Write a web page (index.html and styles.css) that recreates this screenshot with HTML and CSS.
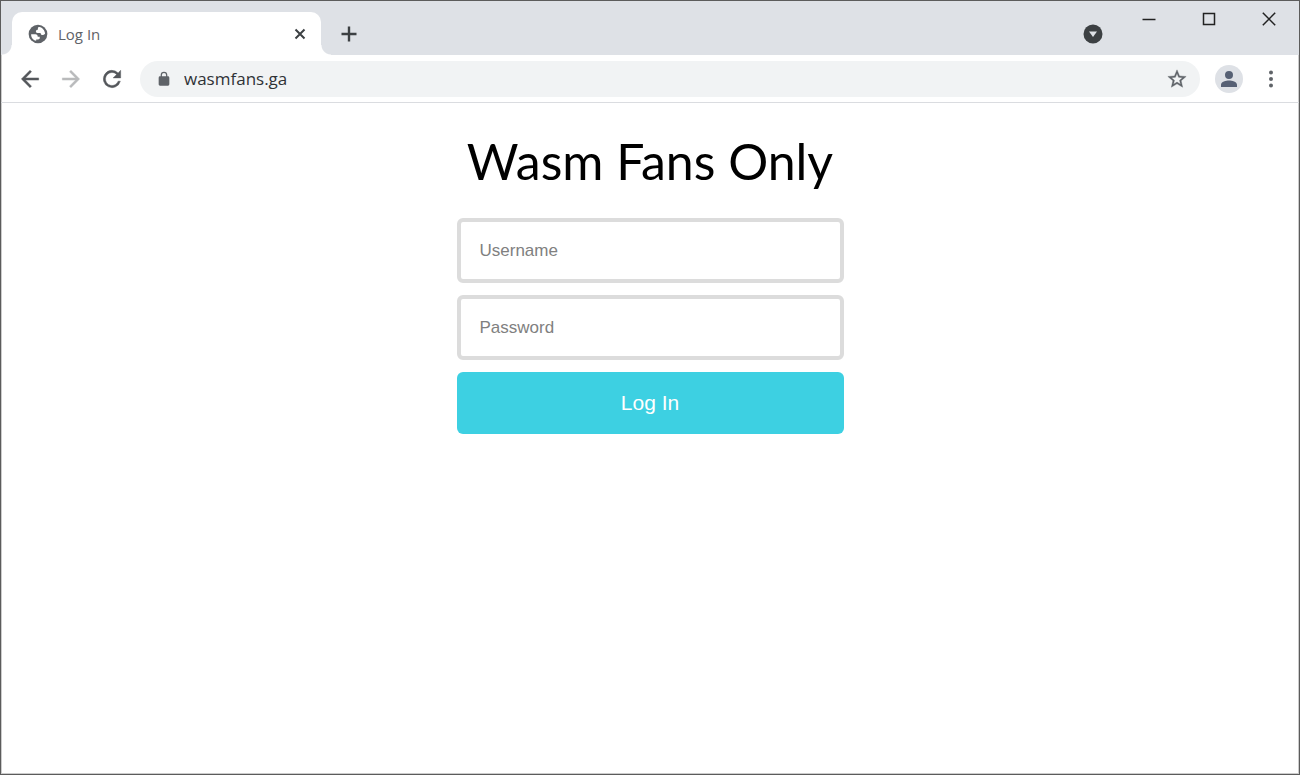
FILE: index.html
```html
<!DOCTYPE html>
<html lang="en">
<head>
<meta charset="utf-8">
<title>Log In</title>
<link rel="stylesheet" href="styles.css">
</head>
<body>
<div class="window">
  <header class="tab-strip">
    <div class="tab">
      <svg class="icon-tab" viewBox="0 0 24 24" aria-hidden="true"><circle cx="12" cy="12" r="10.200"/><path d="M4.500 12.300h4.700c1.800 0 2.500 1 2.500 2.700h2.200v1.700c0 .8-.8 1.300-1.800 1.300H10v1.400C6.500 18.700 4.300 15.600 4.500 12.300zM13.500 4.300c3.500.7 6 3.800 6.200 7.400-.8.900-1.800 1.300-2.700 1.300-1.300 0-2.200-.8-2.200-2.200h-3.300c-1.300 0-1.800-.8-1.800-1.800s.8-1.700 2.200-1.700V5.500c0-.7.700-1.200 1.600-1.200z"/></svg>
      <span class="tab-title">Log In</span>
      <button class="icon-button" type="button" aria-label="Close tab"><svg class="icon-close-tab" viewBox="0 0 12 12"><path d="M1.500 1.500l9 9M10.500 1.500l-9 9"/></svg></button>
    </div>
    <button class="icon-button new-tab" type="button" aria-label="New tab"><svg class="icon-plus" viewBox="0 0 16 16"><path d="M8 .5v15M.5 8h15"/></svg></button>
    <button class="icon-button tab-search" type="button" aria-label="Search tabs"><svg class="icon-search" viewBox="0 0 20 20"><circle cx="10" cy="10" r="9.500"/><path d="M6 7.500h8l-4 5.500z"/></svg></button>
    <div class="window-controls">
      <button class="window-button" type="button" aria-label="Minimize"><svg viewBox="0 0 14 14"><path d="M.5 7.500h13"/></svg></button>
      <button class="window-button" type="button" aria-label="Maximize"><svg viewBox="0 0 14 14"><path d="M1.500 1.500h11v11h-11z"/></svg></button>
      <button class="window-button" type="button" aria-label="Close"><svg viewBox="0 0 14 14"><path d="M.8.8l12.400 12.400M13.200.8L.8 13.200"/></svg></button>
    </div>
  </header>
  <nav class="toolbar" aria-label="Navigation">
    <button class="icon-button" type="button" aria-label="Back"><svg class="icon-nav" viewBox="0 0 24 24"><path d="M20 11H7.830l5.590-5.590L12 4l-8 8 8 8 1.410-1.410L7.830 13H20z"/></svg></button>
    <button class="icon-button" type="button" aria-label="Forward" disabled><svg class="icon-nav icon-nav-off" viewBox="0 0 24 24"><path d="M12 4l-1.410 1.410L16.170 11H4v2h12.170l-5.580 5.590L12 20l8-8z"/></svg></button>
    <button class="icon-button" type="button" aria-label="Reload"><svg class="icon-nav" viewBox="0 0 24 24"><path d="M17.650 6.350A8 8 0 1 0 19.730 14h-2.080A6 6 0 1 1 12 6c1.660 0 3.140.69 4.220 1.780L13 11h7V4z"/></svg></button>
    <div class="address-bar">
      <svg class="icon-lock" viewBox="0 0 24 24" aria-hidden="true"><path d="M18 8h-1V6A5 5 0 0 0 7 6v2H6a2 2 0 0 0-2 2v10c0 1.100.9 2 2 2h12a2 2 0 0 0 2-2V10a2 2 0 0 0-2-2zM8.900 8V6a3.100 3.100 0 0 1 6.200 0v2z"/></svg>
      <input class="address-input" type="text" value="wasmfans.ga" aria-label="Address" spellcheck="false">
      <button class="icon-button" type="button" aria-label="Bookmark"><svg class="icon-star" viewBox="0 0 24 24"><path d="M22 9.240l-7.190-.62L12 2 9.190 8.630 2 9.240l5.460 4.730L5.820 21 12 17.270 18.180 21l-1.630-7.030zM12 15.400l-3.760 2.270 1-4.280-3.320-2.880 4.380-.38L12 6.100l1.710 4.040 4.380.38-3.320 2.880 1 4.280z"/></svg></button>
    </div>
    <button class="icon-button avatar" type="button" aria-label="Profile"><svg class="icon-person" viewBox="0 0 16 16"><path d="M8 8a4 4 0 1 0 0-8 4 4 0 0 0 0 8zM8 9.500c-3 0-8 1.200-8 4.200V16h16v-2.300c0-3-5-4.200-8-4.200z"/></svg></button>
    <button class="icon-button" type="button" aria-label="Menu"><svg class="icon-menu" viewBox="0 0 4 18"><circle cx="2" cy="2.500" r="2"/><circle cx="2" cy="9" r="2"/><circle cx="2" cy="15.500" r="2"/></svg></button>
  </nav>
  <main class="page">
    <form class="login">
      <h1 class="login-title">Wasm Fans Only</h1>
      <input class="login-field" type="text" placeholder="Username" aria-label="Username">
      <input class="login-field" type="password" placeholder="Password" aria-label="Password">
      <button class="login-submit" type="button">Log In</button>
    </form>
  </main>
</div>
</body>
</html>
```
FILE: styles.css
```css
* { box-sizing: border-box; }

body { margin: 0; background: #fff; }

.window {
  display: flex;
  flex-direction: column;
  min-height: 100vh;
  border: 1px solid #5c5c5c;
  box-shadow: inset 0 0 0 1px #ccc;
}

svg { display: block; }

.icon-button {
  display: flex;
  align-items: center;
  justify-content: center;
  flex: none;
  padding: 0;
  border: 0;
  background: none;
}

.tab-strip {
  display: flex;
  align-items: flex-end;
  height: 54px;
  padding-left: 11px;
  background: #dee1e6;
}

.tab {
  position: relative;
  display: flex;
  align-items: center;
  gap: 9px;
  width: 309px;
  height: 43px;
  padding: 0 15px 0 15px;
  border-radius: 10px 10px 0 0;
  background: #fff;
}

.tab::before,
.tab::after {
  content: "";
  position: absolute;
  bottom: 0;
  width: 10px;
  height: 10px;
}

.tab::before {
  right: 100%;
  background: radial-gradient(circle at 0 0, #dee1e6 9px, #fff 10px);
}

.tab::after {
  left: 100%;
  background: radial-gradient(circle at 100% 0, #dee1e6 9px, #fff 10px);
}

.tab-title {
  flex: 1;
  color: #5f6368;
  font: 15px/20px "Open Sans", "Noto Sans", sans-serif;
}

.icon-tab { width: 22px; height: 22px; fill: #5f6368; }
.icon-tab path { fill: #fff; }

.icon-close-tab {
  width: 12px;
  height: 12px;
  stroke: #3c4043;
  stroke-width: 2;
}

.new-tab { width: 56px; height: 43px; }

.icon-plus {
  width: 16px;
  height: 16px;
  stroke: #3c4043;
  stroke-width: 2.4;
}

.tab-search { height: 43px; margin-left: auto; }

.icon-search { width: 20px; height: 20px; fill: #3c4043; }
.icon-search path { fill: #dee1e6; }

.window-controls {
  display: flex;
  align-self: flex-start;
  margin-left: 16px;
}

.window-button {
  display: flex;
  align-items: center;
  justify-content: center;
  width: 60px;
  height: 36px;
  padding: 0;
  border: 0;
  background: none;
}

.window-button svg {
  width: 14px;
  height: 14px;
  fill: none;
  stroke: #222;
  stroke-width: 1.5;
}

.toolbar {
  display: flex;
  align-items: center;
  gap: 15px;
  height: 48px;
  padding: 0 15px 0 16px;
  border-bottom: 1px solid #dadce0;
}

.icon-nav {
  width: 26px;
  height: 26px;
  fill: #54575b;
  stroke: #54575b;
  stroke-width: 0.4;
}

.icon-nav-off { fill: #b9babc; stroke: #b9babc; }

.address-bar {
  display: flex;
  flex: 1;
  align-items: center;
  gap: 12px;
  height: 36px;
  padding: 0 12px 0 16px;
  border-radius: 18px;
  background: #f1f3f4;
}

.icon-lock { flex: none; width: 16px; height: 16px; fill: #5f6368; }

.address-input {
  flex: 1;
  min-width: 0;
  padding: 0;
  border: 0;
  background: none;
  color: #2f3236;
  font: 17px/24px "Open Sans", "Noto Sans", sans-serif;
}

.icon-star {
  width: 22px;
  height: 22px;
  fill: #5f6368;
  stroke: #5f6368;
  stroke-width: 0.4;
}

.avatar {
  width: 28px;
  height: 28px;
  border-radius: 50%;
  background: #dee1e6;
}

.icon-person { width: 16px; height: 16px; fill: #566074; }
.icon-menu { width: 26px; height: 18px; fill: #5f6368; }

.page {
  display: flex;
  justify-content: center;
  padding: 26px 16px;
}

.login {
  display: flex;
  flex-direction: column;
  gap: 12px;
  width: 100%;
  max-width: 387px;
}

.login-title {
  margin: 0 0 13px;
  color: #000;
  font: 400 50px/64px Lato, sans-serif;
  text-align: center;
  white-space: nowrap;
}

.login-field {
  width: 100%;
  height: 65px;
  padding: 0 19px;
  border: 4px solid #dcdcdc;
  border-radius: 6px;
  background: #fff;
  color: #222;
  font: 17px/24px "Liberation Sans", Arial, sans-serif;
}

.login-field::placeholder { color: #808080; }

.login-submit {
  height: 62px;
  padding: 0;
  border: 0;
  border-radius: 6px;
  background: #3dd0e2;
  color: #fff;
  font: 21px/28px "Liberation Sans", Arial, sans-serif;
}
```
